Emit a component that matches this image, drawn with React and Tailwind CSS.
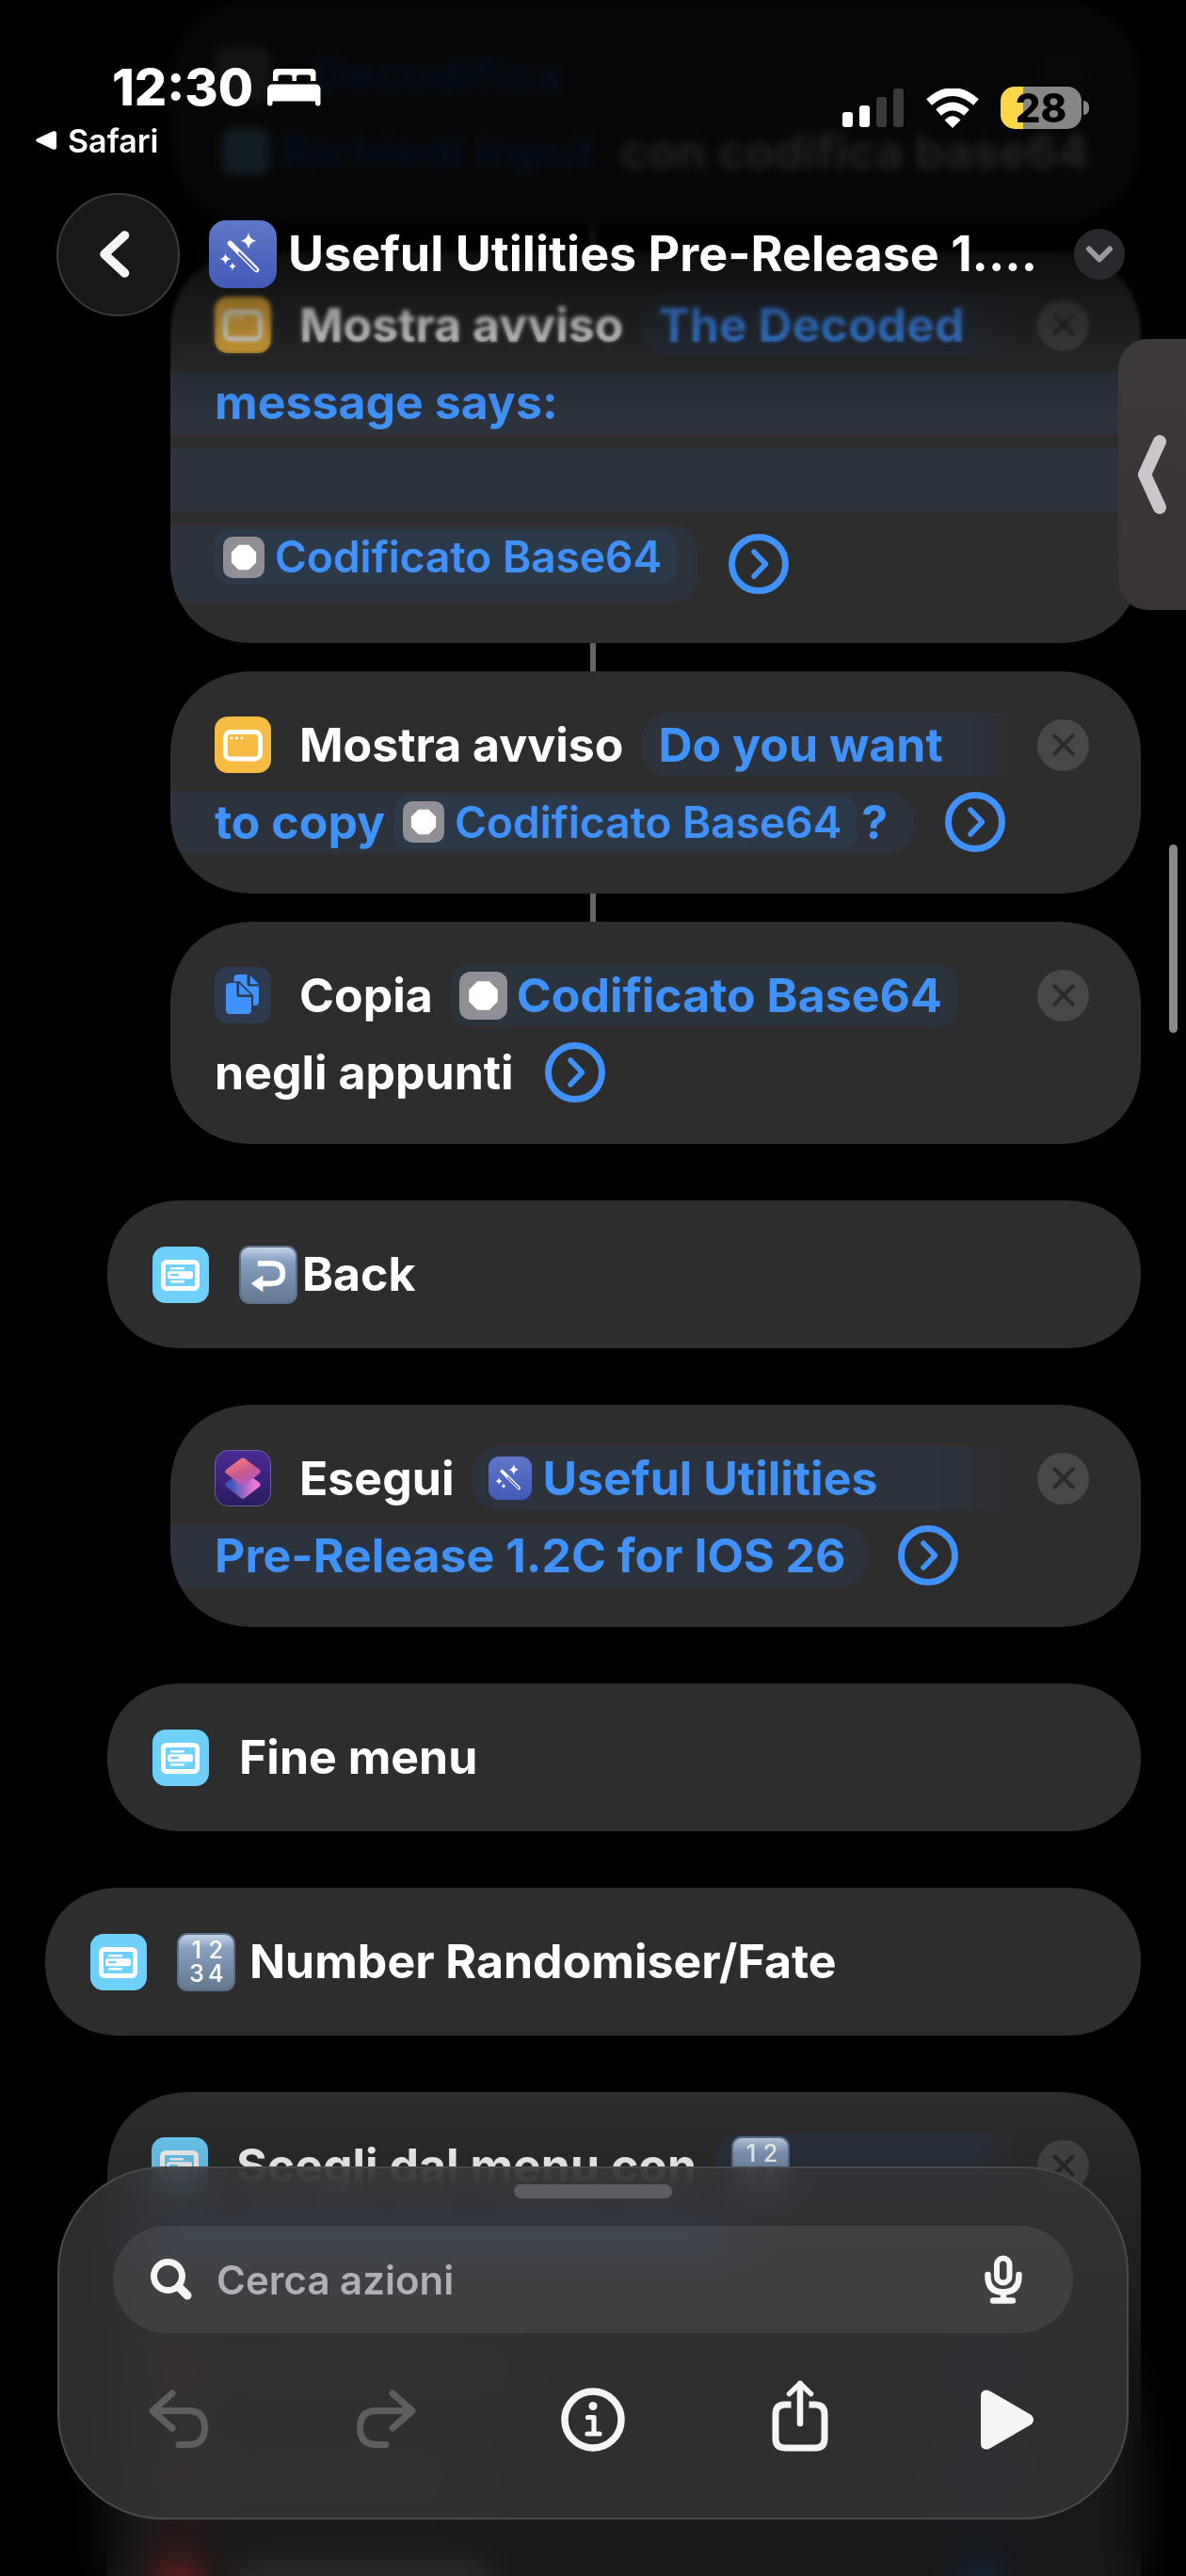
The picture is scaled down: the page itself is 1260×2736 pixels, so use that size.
import { useState } from 'react'

const MENU_OPTIONS = ['w-[300px]', 'w-[240px]', 'w-[280px]']

const TOOLBAR = [
  { label: 'Annulla', icon: UndoIcon, disabled: true },
  { label: 'Ripristina', icon: RedoIcon, disabled: true },
  { label: 'Info', icon: InfoIcon },
  { label: 'Condividi', icon: ShareIcon },
  { label: 'Esegui', icon: PlayIcon },
]

/* ---------- icons ---------- */

function WandIcon({ className }) {
  return (
    <svg viewBox="0 0 72 72" className={className} aria-hidden="true">
      <defs>
        <linearGradient id="wand-bg" x1="0" y1="0" x2="0" y2="1">
          <stop offset="0" stopColor="#5f77c6" />
          <stop offset="1" stopColor="#4259b9" />
        </linearGradient>
      </defs>
      <rect width="72" height="72" rx="18" fill="url(#wand-bg)" />
      <path d="M22.500 24.500L50.500 52.500" stroke="#fff" strokeWidth="5.600" strokeLinecap="round" />
      <path d="M32 34.500L50 52.500" stroke="#4a62bd" strokeWidth="2" strokeLinecap="round" />
      <path d="M42 13q1.200 7.800 8.500 8.800q-7.300 1-8.500 8.800q-1.200-7.800-8.500-8.800q7.300-1 8.500-8.800z" fill="#fff" />
      <path d="M17.500 35q.8 5.200 6 6q-5.200.8-6 6q-.8-5.200-6-6q5.200-.8 6-6z" fill="#fff" />
      <path d="M25 44.500q.6 3.800 4 4.300q-3.400.6-4 4.300q-.6-3.700-4-4.300q3.400-.5 4-4.300z" fill="#fff" />
    </svg>
  )
}

function AlertIcon() {
  return (
    <svg viewBox="0 0 60 60" className="size-[60px] shrink-0" aria-hidden="true">
      <rect width="60" height="60" rx="14" fill="#f6bb43" />
      <rect x="11.500" y="16.500" width="37" height="28.500" rx="5.500" fill="none" stroke="#fff" strokeWidth="4.800" />
      <circle cx="18" cy="23" r="1.500" fill="#fff" />
      <circle cx="23.500" cy="23" r="1.500" fill="#fff" />
      <circle cx="29" cy="23" r="1.500" fill="#fff" />
    </svg>
  )
}

function MenuIcon() {
  return (
    <svg viewBox="0 0 60 60" className="size-[60px] shrink-0" aria-hidden="true">
      <rect width="60" height="60" rx="14" fill="#6fd1fb" />
      <rect x="11.500" y="16.500" width="36" height="28" rx="3.500" fill="none" stroke="#fff" strokeWidth="5" />
      <rect x="19" y="22" width="15" height="2.600" rx="1.300" fill="#fff" />
      <rect x="16" y="26.300" width="27" height="8" rx="2.500" fill="#fff" />
      <rect x="19" y="29" width="9" height="2.200" rx="1.100" fill="#6fd1fb" />
      <rect x="19" y="36" width="15" height="2.600" rx="1.300" fill="#fff" />
    </svg>
  )
}

function CopyIcon() {
  return (
    <svg viewBox="0 0 60 60" className="size-[60px] shrink-0" aria-hidden="true">
      <rect width="60" height="60" rx="14" fill="#2d3a50" />
      <path d="M24.500 8h10v10q0 2.500 2.500 2.500h10V37q0 4-4 4h-18.500q-4 0-4-4V12q0-4 4-4z" fill="#4191fa" />
      <path d="M37.800 9l9.200 9.300h-9.200z" fill="#4191fa" />
      <path d="M16 15.500h10.500L41 30v20q0 2-2 2H12V19.500z" fill="#2d3a50" />
      <path d="M16 17h7.500v12q0 3 3 3H39v14q0 4-4 4H16q-4 0-4-4V21q0-4 4-4z" fill="#4191fa" />
      <path d="M26 17.500L38.500 29.500h-11q-1.500 0-1.500-1.500z" fill="#4191fa" />
    </svg>
  )
}

function ShortcutsIcon() {
  return (
    <svg viewBox="0 0 60 60" className="size-[60px] shrink-0" aria-hidden="true">
      <defs>
        <linearGradient id="sc-bg" x1="0" y1="0" x2="0" y2="1">
          <stop offset="0" stopColor="#4c2b96" />
          <stop offset="1" stopColor="#2a1b5f" />
        </linearGradient>
        <linearGradient id="sc-low" x1="0" y1="0" x2="1" y2="0">
          <stop offset="0.100" stopColor="#3f55bd" />
          <stop offset="0.900" stopColor="#ee78d2" />
        </linearGradient>
        <linearGradient id="sc-top" x1="0" y1="0" x2="0.600" y2="1">
          <stop offset="0" stopColor="#fb7f80" />
          <stop offset="0.600" stopColor="#c9588f" />
          <stop offset="1" stopColor="#b95bb8" />
        </linearGradient>
      </defs>
      <rect x="0.500" y="0.500" width="59" height="59" rx="14" fill="url(#sc-bg)" stroke="#8877b4" strokeOpacity="0.700" />
      <path d="M30 25.500L45.500 37L30 49L14.500 37z" fill="url(#sc-low)" stroke="url(#sc-low)" strokeWidth="6" strokeLinejoin="round" />
      <path d="M30 11.500L45.500 23L30 35L14.500 23z" fill="url(#sc-top)" stroke="url(#sc-top)" strokeWidth="6" strokeLinejoin="round" />
    </svg>
  )
}

function StopIcon({ className }) {
  return (
    <svg viewBox="0 0 51 51" className={className} aria-hidden="true">
      <rect width="51" height="51" rx="12" fill="#918f96" />
      <path d="M19.500 11h12l8.500 8.500v12L31.500 40h-12L11 31.500v-12z" fill="#fff" stroke="#fff" strokeWidth="1.500" strokeLinejoin="round" />
    </svg>
  )
}

function BedIcon() {
  return (
    <svg viewBox="0 0 57 40" className="h-[40px] w-[57px]" fill="#fff" aria-hidden="true">
      <path d="M11 0h36q4.500 0 4.500 4.500V13h-5.500V9q0-2.500-2.500-2.500h-10Q31 6.500 31 9v4h-4.500V9q0-2.500-2.500-2.500H14q-2.500 0-2.500 2.500v4H6V4.500Q6 0 11 0z" />
      <path d="M6 16.500h45q5.500 0 5.500 5.500v15q0 2.500-2.700 2.500T51 37v-2.500H5.500V37q0 2.500-2.700 2.500T0 37V22q0-5.500 6-5.500z" />
    </svg>
  )
}

function SignalIcon() {
  return (
    <svg viewBox="0 0 66 42" className="h-[42px] w-[66px]" aria-hidden="true">
      <rect x="0" y="25" width="11" height="16" rx="3" fill="#fff" />
      <rect x="18" y="18" width="11" height="23" rx="3" fill="#fff" />
      <rect x="36" y="9" width="11" height="32" rx="3" fill="#3a3a3a" />
      <rect x="54" y="0" width="11" height="41" rx="3" fill="#3a3a3a" />
    </svg>
  )
}

function WifiIcon() {
  return (
    <svg viewBox="0 0 58 42" className="h-[42px] w-[58px]" aria-hidden="true">
      <path d="M4 14.500Q29-7.500 54 14.500" fill="none" stroke="#fff" strokeWidth="8.500" />
      <path d="M14 25.500Q29 12.500 44 25.500" fill="none" stroke="#fff" strokeWidth="8.500" />
      <path d="M20.500 33.500Q29 25 37.500 33.500L29 42z" fill="#fff" />
    </svg>
  )
}

function UndoIcon() {
  return (
    <svg viewBox="0 0 64 64" className="size-[64px]" fill="none" stroke="#5e5e60" strokeWidth="7" strokeLinecap="round" strokeLinejoin="round" aria-hidden="true">
      <path d="M25 4L4 22.500L25 41" />
      <path d="M5 22.500H42Q59.500 22.500 59.500 40.500T42 58.500H32" />
    </svg>
  )
}

function RedoIcon() {
  return (
    <svg viewBox="0 0 64 64" className="size-[64px]" fill="none" stroke="#5e5e60" strokeWidth="7" strokeLinecap="round" strokeLinejoin="round" aria-hidden="true">
      <path d="M39 4L60 22.500L39 41" />
      <path d="M59 22.500H22Q4.500 22.500 4.500 40.500T22 58.500H32" />
    </svg>
  )
}

function InfoIcon() {
  return (
    <svg viewBox="0 0 68 68" className="size-[68px]" fill="none" stroke="#f5f5f5" aria-hidden="true">
      <circle cx="34" cy="34" r="30" strokeWidth="7.500" />
      <circle cx="34" cy="19.500" r="4.500" fill="#f5f5f5" stroke="none" />
      <path d="M28.500 31.500h6.500v17M28 49h13" strokeWidth="5.200" strokeLinecap="round" strokeLinejoin="round" />
    </svg>
  )
}

function ShareIcon() {
  return (
    <svg viewBox="0 0 60 84" className="h-[84px] w-[60px]" fill="none" stroke="#f5f5f5" strokeWidth="7" aria-hidden="true">
      <path d="M20.500 26H14Q4 26 4 36v26q0 10 10 10h32q10 0 10-10V36q0-10-10-10h-6.500" />
      <path d="M30 46V4" strokeWidth="6.500" strokeLinecap="round" />
      <path d="M18.500 14.500L30 3.500L41.500 14.500" strokeWidth="5.500" strokeLinecap="round" strokeLinejoin="round" />
    </svg>
  )
}

function PlayIcon() {
  return (
    <svg viewBox="0 0 56 64" className="h-[64px] w-[56px]" aria-hidden="true">
      <path d="M0 7Q0 .5 6 .5Q8 .5 10.500 2L52 26Q56 28.500 56 32T52 38L10.500 62Q8 63.500 6 63.500Q0 63.500 0 57z" fill="#f5f5f5" />
    </svg>
  )
}

function SearchIcon() {
  return (
    <svg viewBox="0 0 44 44" className="size-[44px] shrink-0" fill="none" stroke="#f5f5f5" aria-hidden="true">
      <circle cx="18.500" cy="18.500" r="15" strokeWidth="7" />
      <path d="M30.500 30.500L39 39" strokeWidth="9" strokeLinecap="round" />
    </svg>
  )
}

function MicIcon() {
  return (
    <svg viewBox="0 0 40 52" className="h-[52px] w-[40px]" fill="none" stroke="#f5f5f5" strokeLinecap="round" aria-hidden="true">
      <rect x="13" y="3.500" width="13.500" height="26" rx="6.800" strokeWidth="6" />
      <path d="M3.500 21v1.500Q3.500 39.500 20 39.500T36.500 22.500V21" strokeWidth="6.500" />
      <path d="M20 41v6M9 48.500h21" strokeWidth="6.500" />
    </svg>
  )
}

/* ---------- small pieces ---------- */

function RemoveButton() {
  return (
    <button type="button" aria-label="Rimuovi azione" className="ml-[17px] flex size-[55px] shrink-0 items-center justify-center rounded-full bg-[#48484b]">
      <svg viewBox="0 0 24 24" className="size-[24px]" stroke="#2b2b2d" strokeWidth="4" strokeLinecap="round" aria-hidden="true">
        <path d="M2.500 2.500L21.500 21.500M21.500 2.500L2.500 21.500" />
      </svg>
    </button>
  )
}

function ExpandButton() {
  return (
    <button type="button" aria-label="Mostra altro" className="ml-[33px] size-[64px] shrink-0">
      <svg viewBox="0 0 64 64" className="size-[64px]" fill="none" stroke="#4191fa" strokeLinecap="round" strokeLinejoin="round" aria-hidden="true">
        <circle cx="32" cy="32" r="28.500" strokeWidth="7" />
        <path d="M27 19L39.500 32L27 45" strokeWidth="5.500" />
      </svg>
    </button>
  )
}

function InlineVariable({ children }) {
  return (
    <span className="flex h-[57px] items-center rounded-[16px] bg-[#2b3948] pl-[9px] pr-[16px] text-[46px] font-semibold">
      <StopIcon className="mr-[11px] size-[44px] shrink-0" />
      {children}
    </span>
  )
}

function EmojiTile({ children }) {
  return (
    <span className="flex size-[62px] shrink-0 items-center justify-center rounded-[11px] border-2 border-[#5c6f88] bg-linear-to-b from-[#c3d3e6] via-[#86a0c2] via-25% to-[#64788f] text-white">
      {children}
    </span>
  )
}

function NumbersEmoji() {
  return (
    <EmojiTile>
      <span className="grid grid-cols-2 gap-x-1 text-center text-[25px] leading-[25px] font-medium">
        <span>1</span>
        <span>2</span>
        <span>3</span>
        <span>4</span>
      </span>
    </EmojiTile>
  )
}

function Card({ children, className = '' }) {
  return (
    <section className={`overflow-hidden rounded-[88px] bg-[#2d2d2e] [corner-shape:superellipse(1.1)] ${className}`}>
      {children}
    </section>
  )
}

function ActionCard({ children }) {
  return <Card className="ml-[181px] pt-[37px] pb-[35px]">{children}</Card>
}

function MenuCard({ children, className = '' }) {
  return (
    <Card className={`flex h-[157px] items-center px-[48px] ${className}`}>
      <MenuIcon />
      <div className="ml-[32px] flex items-center">{children}</div>
    </Card>
  )
}

function Line({ children }) {
  return <div className="flex h-[82px] items-center pr-[55px] pl-[47px]">{children}</div>
}

function WrappedLine({ children }) {
  return <div className="flex h-[82px] items-center text-[#4191fa]">{children}</div>
}

function OpenPill({ children }) {
  return (
    <span className="ml-[19px] flex h-[68px] flex-1 items-center rounded-l-[30px] bg-linear-to-r from-[#2c333d] from-85% to-[#2d2d2e] pl-[18px] text-[#4191fa]">
      {children}
    </span>
  )
}

function Connector() {
  return <div className="ml-[627px] h-[30px] w-[6px] bg-[#646468]" />
}

/* ---------- screen parts ---------- */

function ActionList() {
  return (
    <main className="pt-px pr-[48px] text-[50px] font-bold whitespace-nowrap text-white">
      <ActionCard>
        <Line>
          <span className="size-[60px] rounded-[14px] bg-[#8e8e93]" />
          <span className="ml-[45px] text-[#1d6fd8]">Decodifica</span>
          <span className="ml-auto size-[55px] rounded-full bg-[#3a3a3c]" />
        </Line>
        <Line>
          <span className="ml-[8px] size-[50px] rounded-[11px] bg-[#7fd6ff]" />
          <span className="ml-[12px] text-[#1d6fd8]">Richiedi input</span>
          <span className="ml-auto">con codifica base64</span>
        </Line>
      </ActionCard>
      <Connector />

      <ActionCard>
        <Line>
          <AlertIcon />
          <span className="ml-[30px]">Mostra avviso</span>
          <OpenPill>The Decoded</OpenPill>
          <RemoveButton />
        </Line>
        <WrappedLine>
          <span className="flex h-[67px] flex-1 items-center bg-[#2c333d] pl-[47px]">message says:</span>
        </WrappedLine>
        <WrappedLine>
          <span className="h-[67px] flex-1 bg-[#2c333d]" />
        </WrappedLine>
        <div className="flex h-[98px] items-center text-[#4191fa]">
          <span className="flex h-[82px] items-start rounded-r-[26px] bg-[#2c333d] pt-[5px] pr-[22px] pl-[47px]">
            <InlineVariable>Codificato Base64</InlineVariable>
          </span>
          <ExpandButton />
        </div>
      </ActionCard>
      <Connector />

      <ActionCard>
        <Line>
          <AlertIcon />
          <span className="ml-[30px]">Mostra avviso</span>
          <OpenPill>Do you want</OpenPill>
          <RemoveButton />
        </Line>
        <WrappedLine>
          <span className="flex h-[67px] items-center rounded-r-[30px] bg-[#2c333d] pr-[28px] pl-[47px]">
            <span className="mr-[10px]">to copy</span>
            <InlineVariable>Codificato Base64</InlineVariable>
            <span className="ml-[5px]">?</span>
          </span>
          <ExpandButton />
        </WrappedLine>
      </ActionCard>
      <Connector />

      <ActionCard>
        <Line>
          <CopyIcon />
          <span className="ml-[30px]">Copia</span>
          <span className="mr-auto ml-[19px] flex h-[65px] items-center rounded-[18px] bg-[#2b343d] pr-[16px] pl-[9px] text-[#4191fa]">
            <StopIcon className="mr-[10px] size-[51px] shrink-0" />
            Codificato Base64
          </span>
          <RemoveButton />
        </Line>
        <Line>
          negli appunti
          <ExpandButton />
        </Line>
      </ActionCard>

      <MenuCard className="mt-[60px] ml-[114px]">
        <EmojiTile>
          <svg viewBox="0 0 62 62" className="size-[58px]" aria-hidden="true">
            <path d="M19 18H35Q47.500 18 47.500 29.500T35 41H24" fill="none" stroke="#fff" strokeWidth="6" />
            <path d="M11.500 41L25 31.500V50.500z" fill="#fff" />
          </svg>
        </EmojiTile>
        <span className="ml-[5px]">Back</span>
      </MenuCard>

      <div className="mt-[60px]">
        <ActionCard>
          <Line>
            <ShortcutsIcon />
            <span className="ml-[30px]">Esegui</span>
            <OpenPill>
              <WandIcon className="mr-[11px] size-[46px] shrink-0" />
              Useful Utilities
            </OpenPill>
            <RemoveButton />
          </Line>
          <WrappedLine>
            <span className="flex h-[67px] items-center rounded-r-[30px] bg-[#2c333d] pr-[22px] pl-[47px]">
              Pre-Release 1.2C for IOS 26
            </span>
            <ExpandButton />
          </WrappedLine>
        </ActionCard>
      </div>

      <MenuCard className="mt-[60px] ml-[114px]">Fine menu</MenuCard>

      <MenuCard className="mt-[60px] ml-[48px]">
        <NumbersEmoji />
        <span className="ml-[15px]">Number Randomiser/Fate</span>
      </MenuCard>

      <Card className="mt-[60px] ml-[114px] h-[700px] pt-[37px]">
        <Line>
          <MenuIcon />
          <span className="ml-[30px]">Scegli dal menu con</span>
          <OpenPill>
            <NumbersEmoji />
          </OpenPill>
          <RemoveButton />
        </Line>
        <div className="mb-[84px] h-[68px] w-[700px] rounded-r-[30px] bg-[#2c333d] px-[47px] py-[12px]">
          <div className="h-[44px] rounded-[16px] bg-[#2a64a8]" />
        </div>
        {MENU_OPTIONS.map((width) => (
          <div key={width} className="mb-[56px] flex h-[52px] items-center pr-[150px] pl-[50px] blur-[14px]">
            <span className="size-[50px] rounded-full bg-[#d83a35]" />
            <span className={`ml-[32px] h-[34px] rounded-full bg-[#5a5a5e] ${width}`} />
            <span className="ml-auto size-[44px] rounded-full bg-[#24508c]" />
          </div>
        ))}
      </Card>
    </main>
  )
}

function Header() {
  return (
    <header className="absolute inset-x-0 top-0 text-white">
      <div className="flex h-[205px] items-start justify-between pr-[103px]">
        <div>
          <div className="mt-[61px] flex h-[64px] items-center gap-[15px] pl-[119px]">
            <span className="text-[54px] leading-[64px] font-extrabold">12:30</span>
            <BedIcon />
          </div>
          <a href="#safari" className="flex h-[48px] items-center gap-[12px] pl-[38px] text-[34px] font-semibold">
            <svg viewBox="0 0 22 20" className="h-[20px] w-[22px]" fill="#fff" aria-hidden="true">
              <path d="M1 8.500L18 .5Q22-.8 22 3V17Q22 20.800 18 19.500L1 11.500Q-.5 10 1 8.500z" />
            </svg>
            Safari
          </a>
        </div>
        <div className="mt-[92px] flex h-[45px] items-center">
          <SignalIcon />
          <span className="w-[22px]" />
          <WifiIcon />
          <span className="w-[22px]" />
          <span className="flex h-[45px] w-[86px] items-center justify-center rounded-[15px] bg-linear-to-r from-[#f8d648] from-28% to-[#868686] to-28% text-[42px] font-extrabold text-black">
            28
          </span>
          <span className="ml-[2px] h-[15px] w-[6px] rounded-r-full bg-[#868686]" />
        </div>
      </div>

      <nav className="flex h-[130px] items-center pr-[65px] pl-[60px]">
        <button type="button" aria-label="Indietro" className="flex size-[131px] shrink-0 items-center justify-center rounded-full border-2 border-[#3b3b3b] bg-[#191919]">
          <svg viewBox="0 0 40 50" className="h-[50px] w-[40px]" fill="none" stroke="#f4f4f4" strokeWidth="9.500" strokeLinecap="round" strokeLinejoin="round" aria-hidden="true">
            <path d="M26.500 5L5 25L26.500 45" />
          </svg>
        </button>
        <WandIcon className="ml-[31px] size-[72px] shrink-0" />
        <h1 className="ml-[12px] text-[52px] font-bold whitespace-nowrap">Useful Utilities Pre-Release 1....</h1>
        <button type="button" aria-label="Opzioni comando" className="ml-auto flex size-[54px] shrink-0 items-center justify-center rounded-full bg-[#29292d]">
          <svg viewBox="0 0 28 18" className="h-[18px] w-[28px]" fill="none" stroke="#98989d" strokeWidth="6" strokeLinecap="round" strokeLinejoin="round" aria-hidden="true">
            <path d="M3 3.500L14 14.500L25 3.500" />
          </svg>
        </button>
      </nav>
    </header>
  )
}

function ActionDrawer() {
  const [query, setQuery] = useState('')

  return (
    <footer className="absolute inset-x-[61px] bottom-[60px] rounded-[112px] border-2 border-[#4a4a4d] bg-[#353537]/84 pt-[17px] pb-[12px] backdrop-blur-[18px]">
      <div className="mx-auto h-[15px] w-[168px] rounded-full bg-[#5b5d60]" />
      <div className="mx-[57px] mt-[29px] flex h-[114px] items-center rounded-full bg-white/8 pr-[54px] pl-[40px]">
        <SearchIcon />
        <input
          type="search"
          aria-label="Cerca azioni"
          placeholder="Cerca azioni"
          value={query}
          onChange={(event) => setQuery(event.target.value)}
          className="ml-[26px] min-w-0 flex-1 bg-transparent text-[42px] font-semibold text-white outline-none placeholder:text-[#b0b0b4]"
        />
        <button type="button" aria-label="Dettatura">
          <MicIcon />
        </button>
      </div>
      <div className="flex h-[184px] items-center justify-between px-[57px]">
        {TOOLBAR.map(({ label, icon: Icon, disabled }) => (
          <button key={label} type="button" aria-label={label} disabled={disabled} className="flex h-[100px] w-[140px] items-center justify-center">
            <Icon />
          </button>
        ))}
      </div>
    </footer>
  )
}

export default function App() {
  return (
    <div className="relative h-screen overflow-hidden bg-black font-['Inter',sans-serif]">
      <ActionList />

      {/* progressive blur and shade behind the header and the drawer */}
      <div className="pointer-events-none absolute inset-x-0 top-0 h-[310px] mask-linear-180 mask-linear-from-70% mask-linear-to-100% backdrop-blur-[5px]" />
      <div className="pointer-events-none absolute inset-x-0 top-0 h-[400px] mask-linear-180 mask-linear-from-85% mask-linear-to-100% backdrop-blur-[2px]" />
      <div className="pointer-events-none absolute inset-x-0 top-0 h-[440px] bg-linear-to-b from-black/86 from-52% via-black/35 via-77% to-transparent" />
      <div className="pointer-events-none absolute inset-x-0 bottom-0 h-[280px] [mask-image:linear-gradient(to_top,black_40%,transparent)] backdrop-blur-[24px]" />
      <div className="pointer-events-none absolute inset-x-0 bottom-0 h-[520px] bg-linear-to-t from-black/45 from-45% to-transparent" />

      <button type="button" aria-label="Apri pannello laterale" className="absolute top-[360px] right-0 flex h-[288px] w-[72px] items-center justify-center rounded-l-[32px] bg-linear-to-b from-[#3c3a38] to-[#393334]">
        <svg viewBox="0 0 32 86" className="h-[86px] w-[32px]" fill="none" stroke="#c9c5cb" strokeWidth="14" strokeLinecap="round" strokeLinejoin="round" aria-hidden="true">
          <path d="M24 8L8 43L24 78" />
        </svg>
      </button>
      <div className="pointer-events-none absolute top-[897px] right-[9px] h-[200px] w-[9px] rounded-full bg-[#88888a]" />

      <Header />
      <ActionDrawer />
    </div>
  )
}
